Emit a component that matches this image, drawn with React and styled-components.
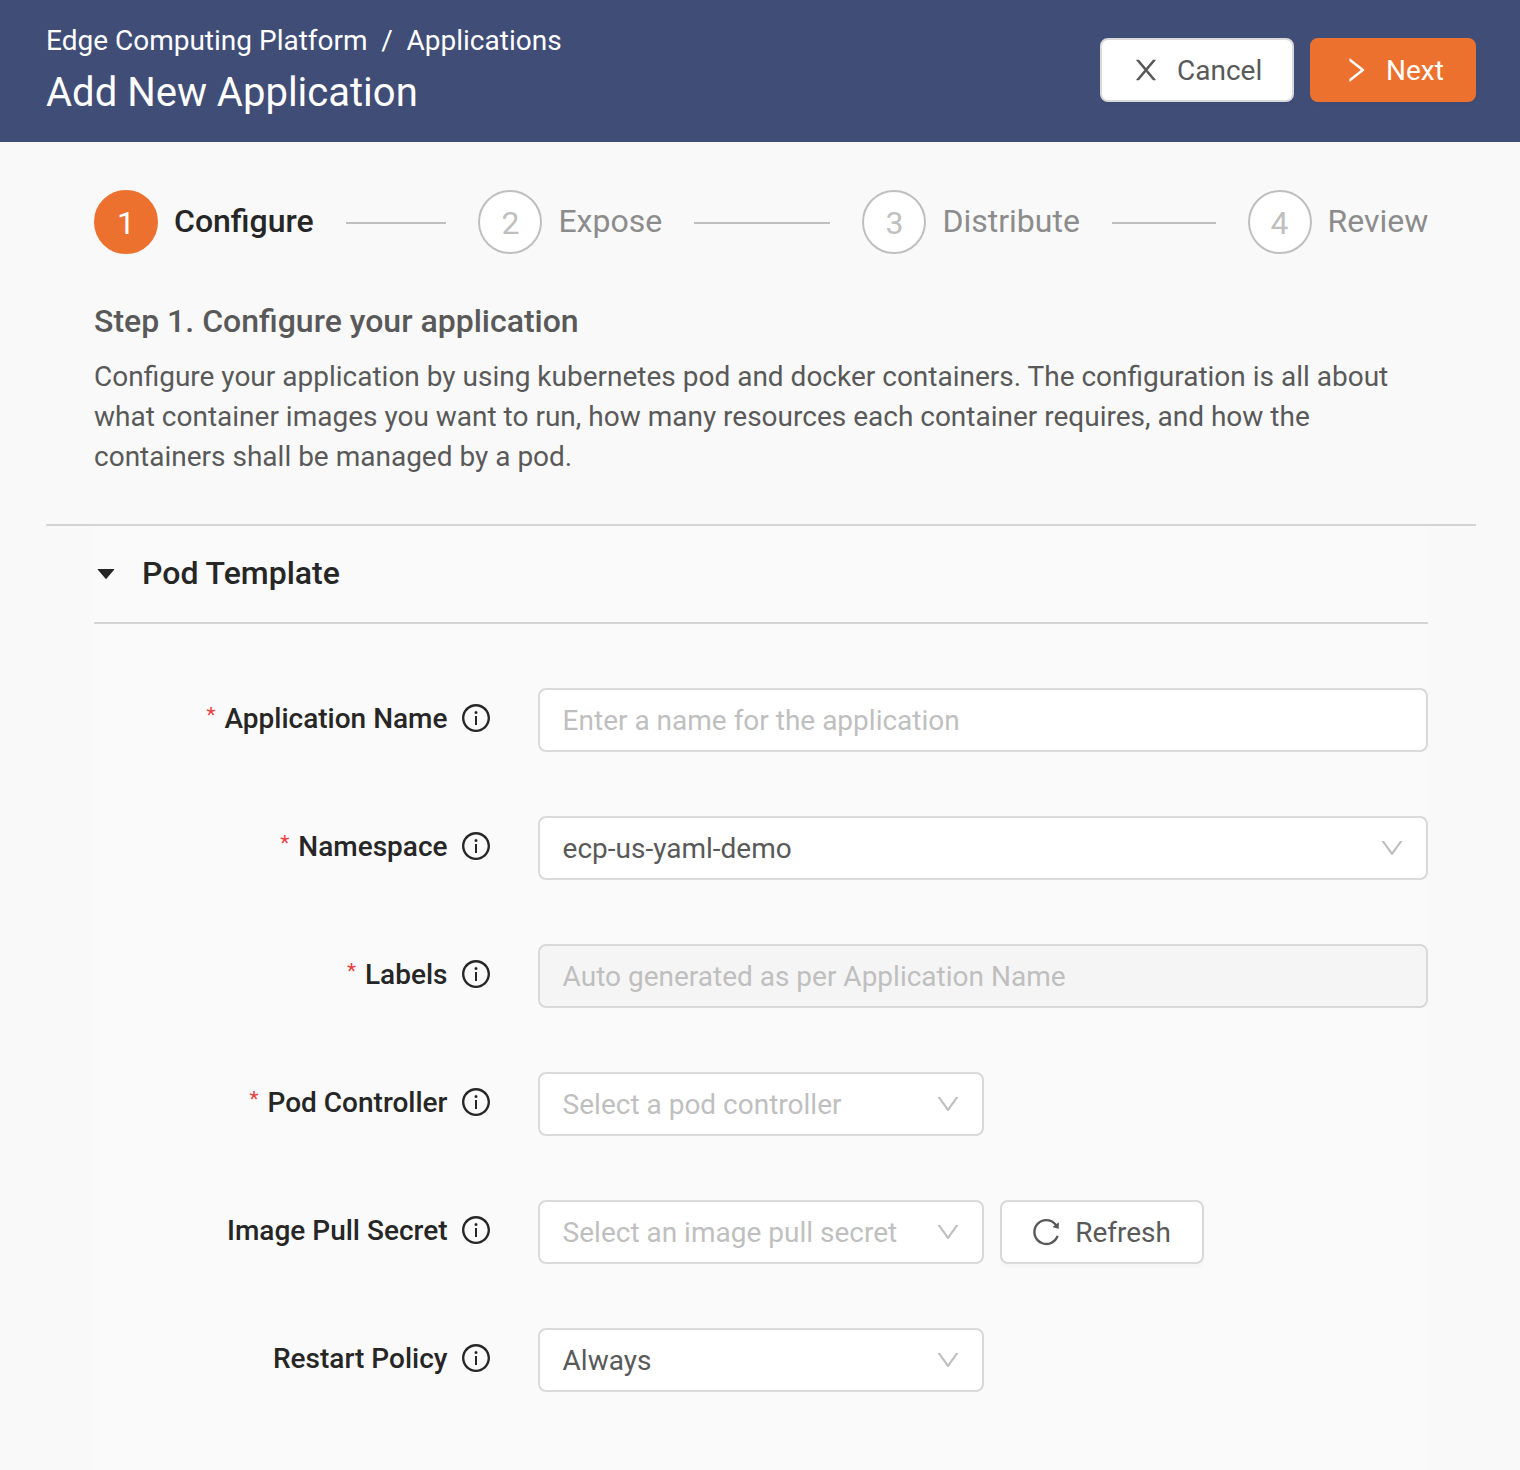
import React from "react";
import styled, { createGlobalStyle } from "styled-components";

const Global = createGlobalStyle`
  *, *::before, *::after { box-sizing: border-box; }
  body {
    margin: 0;
    background: #f9f9f9;
    color: #595959;
    font: 400 28px/40px Roboto, "Liberation Sans", sans-serif;
  }
`;

const paths = {
  close: "M563.8 512l262.5-312.9c4.4-5.2.7-13.1-6.1-13.1h-79.8c-4.7 0-9.2 2.1-12.3 5.7L511.6 449.8 295.1 191.7c-3-3.6-7.5-5.7-12.3-5.7H203c-6.8 0-10.5 7.9-6.1 13.1L459.4 512 196.9 824.9A7.95 7.95 0 0 0 203 838h79.8c4.7 0 9.2-2.1 12.3-5.7l216.5-258.1 216.5 258.1c3 3.6 7.5 5.7 12.3 5.7h79.8c6.8 0 10.5-7.9 6.1-13.1L563.8 512z",
  right: "M765.7 486.8L314.9 134.7A7.97 7.97 0 0 0 302 141v77.3c0 4.9 2.3 9.6 6.1 12.6l360 281.1-360 281.1c-3.9 3-6.1 7.7-6.1 12.6V883c0 6.7 7.7 10.4 12.9 6.3l450.8-352.1a31.96 31.96 0 0 0 0-50.4z",
  down: "M884 256h-75c-5.1 0-9.9 2.5-12.9 6.6L512 654.2 227.9 262.6c-3-4.1-7.8-6.6-12.9-6.6h-75c-6.5 0-10.3 7.4-6.5 12.7l352.6 486.1c12.8 17.6 39 17.6 51.7 0l352.6-486.1c3.9-5.3.1-12.7-6.4-12.7z",
  caret: "M840.4 300H183.6c-19.7 0-30.7 20.8-18.5 35l328.4 380.8c9.4 10.9 27.5 10.9 37 0L858.9 335c12.2-14.2 1.2-35-18.5-35z",
  info: "M512 64C264.6 64 64 264.6 64 512s200.6 448 448 448 448-200.6 448-448S759.4 64 512 64zm0 820c-205.4 0-372-166.6-372-372s166.6-372 372-372 372 166.6 372 372-166.6 372-372 372z M464 336a48 48 0 1 0 96 0 48 48 0 1 0-96 0zm72 112h-48c-4.4 0-8 3.6-8 8v272c0 4.4 3.6 8 8 8h48c4.4 0 8-3.6 8-8V456c0-4.4-3.6-8-8-8z",
  reload: "M909.1 209.3l-56.4 44.1C775.8 155.1 656.2 92 521.9 92 290 92 102.3 279.5 102 511.5 101.7 743.7 289.8 932 521.9 932c181.3 0 335.8-115 394.6-276.1 1.5-4.2-.7-8.9-4.9-10.3l-56.7-19.5a8 8 0 0 0-10.1 4.8c-1.8 5-3.8 10-5.9 14.9-17.3 41-42.1 77.8-73.7 109.4A344.77 344.77 0 0 1 655.9 829c-42.3 17.9-87.4 27-133.8 27-46.5 0-91.5-9.1-133.8-27A341.5 341.5 0 0 1 279 755.2a342.16 342.16 0 0 1-73.7-109.4c-17.9-42.4-27-87.4-27-133.9s9.1-91.5 27-133.9c17.3-41 42.1-77.8 73.7-109.4 31.6-31.6 68.4-56.4 109.3-73.8 42.3-17.9 87.4-27 133.8-27 46.5 0 91.5 9.1 133.8 27a341.5 341.5 0 0 1 109.3 73.8c9.9 9.9 19.2 20.4 27.8 31.4l-60.2 47a8 8 0 0 0 3 14.1l175.6 43c5 1.2 9.9-2.6 9.9-7.7l.8-180.9c-.1-6.6-7.8-10.3-13-6.2z",
};

const Svg = styled.svg`
  display: block;
  flex: none;
  width: ${(p) => p.$size}px;
  height: ${(p) => p.$size}px;
  fill: currentColor;
`;

const Icon = ({ name, size = 32 }) => (
  <Svg $size={size} viewBox="0 0 1024 1024" aria-hidden="true">
    <path d={paths[name]} />
  </Svg>
);

const Page = styled.div`
  width: 1520px;
  height: 1470px;
  overflow: hidden;
`;

const Header = styled.header`
  display: flex;
  justify-content: space-between;
  height: 142px;
  padding: 20px 44px 0 46px;
  background: #404d76;
  color: #fff;
`;

const Breadcrumb = styled.nav`
  display: flex;
  gap: 13.7px;
  height: 42px;
  line-height: 42px;
`;

const PageTitle = styled.h1`
  margin: 0;
  font-size: 40px;
  font-weight: 400;
  line-height: 62px;
`;

const Actions = styled.div`
  display: flex;
  gap: 16px;
  padding-top: 18px;
`;

const Button = styled.button`
  display: flex;
  align-items: center;
  gap: ${(p) => p.$gap || 14}px;
  width: ${(p) => p.$width}px;
  height: 64px;
  padding: 0 0 0 28px;
  border: 2px solid ${(p) => (p.$primary ? "#ed712e" : "#d9d9d9")};
  border-radius: 8px;
  background: ${(p) => (p.$primary ? "#ed712e" : "#fff")};
  color: ${(p) => (p.$primary ? "#fff" : "#595959")};
  font: inherit;
  box-shadow: 0 4px 0 rgba(0, 0, 0, 0.016);
`;

const ButtonText = styled.span`
  padding-top: 2px;
`;

const Steps = styled.ol`
  display: flex;
  align-items: center;
  height: 64px;
  margin: 48px 92px 0 94px;
  padding: 0;
  list-style: none;
`;

const Step = styled.li`
  display: flex;
  flex: none;
  align-items: center;
  width: ${(p) => p.$width}px;
`;

const StepNumber = styled.span`
  display: flex;
  flex: none;
  align-items: center;
  justify-content: center;
  width: 64px;
  height: 64px;
  padding-top: 2px;
  border: 2px solid ${(p) => (p.$active ? "#ed712e" : "#bfbfbf")};
  border-radius: 50%;
  background: ${(p) => (p.$active ? "#ed712e" : "#fff")};
  color: ${(p) => (p.$active ? "#fff" : "#bfbfbf")};
  font-size: 32px;
`;

const StepTitle = styled.span`
  margin-left: 16px;
  padding-bottom: 2px;
  color: ${(p) => (p.$active ? "#262626" : "#8c8c8c")};
  font-size: 32px;
  font-weight: ${(p) => (p.$active ? 500 : 400)};
  white-space: nowrap;
`;

const StepLine = styled.span`
  flex: 1;
  height: 2px;
  margin: 2px 32px 0;
  background: #bfbfbf;
`;

const Intro = styled.section`
  height: 270px;
  padding: 47px 92px 0 94px;
`;

const IntroTitle = styled.h2`
  margin: 0 0 16px;
  font-size: 32px;
  font-weight: 500;
  line-height: 40px;
`;

const IntroText = styled.p`
  margin: 0;
`;

const Section = styled.section`
  margin: 0 44px 0 46px;
  padding: 0 48px;
  border-top: 2px solid #d4d4d4;
`;

const Panel = styled.div`
  height: 944px;
  background: #fafafa;
`;

const PanelHeader = styled.div`
  display: flex;
  align-items: center;
  gap: 24px;
  height: 98px;
  border-bottom: 2px solid #d4d4d4;
  color: #262626;
  font-size: 32px;
  font-weight: 500;
`;

const PanelTitle = styled.span`
  padding-bottom: 2px;
`;

const Form = styled.form`
  display: flex;
  flex-direction: column;
  gap: 64px;
  padding-top: 64px;
`;

const Row = styled.div`
  display: flex;
  gap: 16px;
  height: 64px;
`;

const Label = styled.label`
  display: flex;
  flex: none;
  align-items: center;
  justify-content: flex-end;
  width: 398px;
  height: 60px;
  margin-right: 30px;
  color: #262626;
  font-weight: 500;
  white-space: nowrap;
`;

const Required = styled.span`
  margin-right: 9px;
  padding-bottom: 6px;
  color: #e8403f;
  font-size: 21px;
  font-weight: 400;
`;

const LabelText = styled.span`
  margin-right: 12.5px;
  padding-top: 2px;
`;

const Field = styled.div`
  display: flex;
  flex: none;
  align-items: center;
  justify-content: space-between;
  width: ${(p) => (p.$wide ? 890 : 446)}px;
  height: 64px;
  padding: 0 20px 0 22.6px;
  border: 2px solid #d9d9d9;
  border-radius: 8px;
  background: ${(p) => (p.$disabled ? "#f5f5f5" : "#fff")};
  color: ${(p) => (p.$empty ? "#bfbfbf" : "#595959")};
  white-space: nowrap;
`;

const FieldText = styled.span`
  padding-top: 2px;
`;

const Chevron = styled.span`
  color: #bfbfbf;
`;

const steps = [
  { title: "Configure", width: 384.4 },
  { title: "Expose", width: 384.05 },
  { title: "Distribute", width: 385.1 },
  { title: "Review", width: 180 },
];

const fields = [
  { label: "Application Name", required: true, text: "Enter a name for the application", empty: true, wide: true },
  { label: "Namespace", required: true, text: "ecp-us-yaml-demo", wide: true, select: true },
  { label: "Labels", required: true, text: "Auto generated as per Application Name", empty: true, wide: true, disabled: true },
  { label: "Pod Controller", required: true, text: "Select a pod controller", empty: true, select: true },
  { label: "Image Pull Secret", text: "Select an image pull secret", empty: true, select: true, refresh: true },
  { label: "Restart Policy", text: "Always", select: true },
];

export default function App() {
  return (
    <Page>
      <Global />
      <Header>
        <div>
          <Breadcrumb>
            <span>Edge Computing Platform</span>
            <span>/</span>
            <span>Applications</span>
          </Breadcrumb>
          <PageTitle>Add New Application</PageTitle>
        </div>
        <Actions>
          <Button $width={194} $gap={15}>
            <Icon name="close" />
            <ButtonText>Cancel</ButtonText>
          </Button>
          <Button $width={166} $primary>
            <Icon name="right" />
            <ButtonText>Next</ButtonText>
          </Button>
        </Actions>
      </Header>

      <Steps>
        {steps.map((step, i) => (
          <Step key={step.title} $width={step.width}>
            <StepNumber $active={i === 0}>{i + 1}</StepNumber>
            <StepTitle $active={i === 0}>{step.title}</StepTitle>
            {i < steps.length - 1 && <StepLine />}
          </Step>
        ))}
      </Steps>

      <Intro>
        <IntroTitle>Step 1. Configure your application</IntroTitle>
        <IntroText>
          Configure your application by using kubernetes pod and docker containers. The configuration is all about
          what container images you want to run, how many resources each container requires, and how the
          containers shall be managed by a pod.
        </IntroText>
      </Intro>

      <Section>
        <Panel>
          <PanelHeader>
            <Icon name="caret" size={24} />
            <PanelTitle>Pod Template</PanelTitle>
          </PanelHeader>
          <Form>
            {fields.map((field) => (
              <Row key={field.label}>
                <Label>
                  {field.required && <Required>*</Required>}
                  <LabelText>{field.label}</LabelText>
                  <Icon name="info" />
                </Label>
                <Field $wide={field.wide} $empty={field.empty} $disabled={field.disabled}>
                  <FieldText>{field.text}</FieldText>
                  {field.select && (
                    <Chevron>
                      <Icon name="down" size={28} />
                    </Chevron>
                  )}
                </Field>
                {field.refresh && (
                  <Button type="button" $width={204} $gap={13.2}>
                    <Icon name="reload" />
                    <ButtonText>Refresh</ButtonText>
                  </Button>
                )}
              </Row>
            ))}
          </Form>
        </Panel>
      </Section>
    </Page>
  );
}
